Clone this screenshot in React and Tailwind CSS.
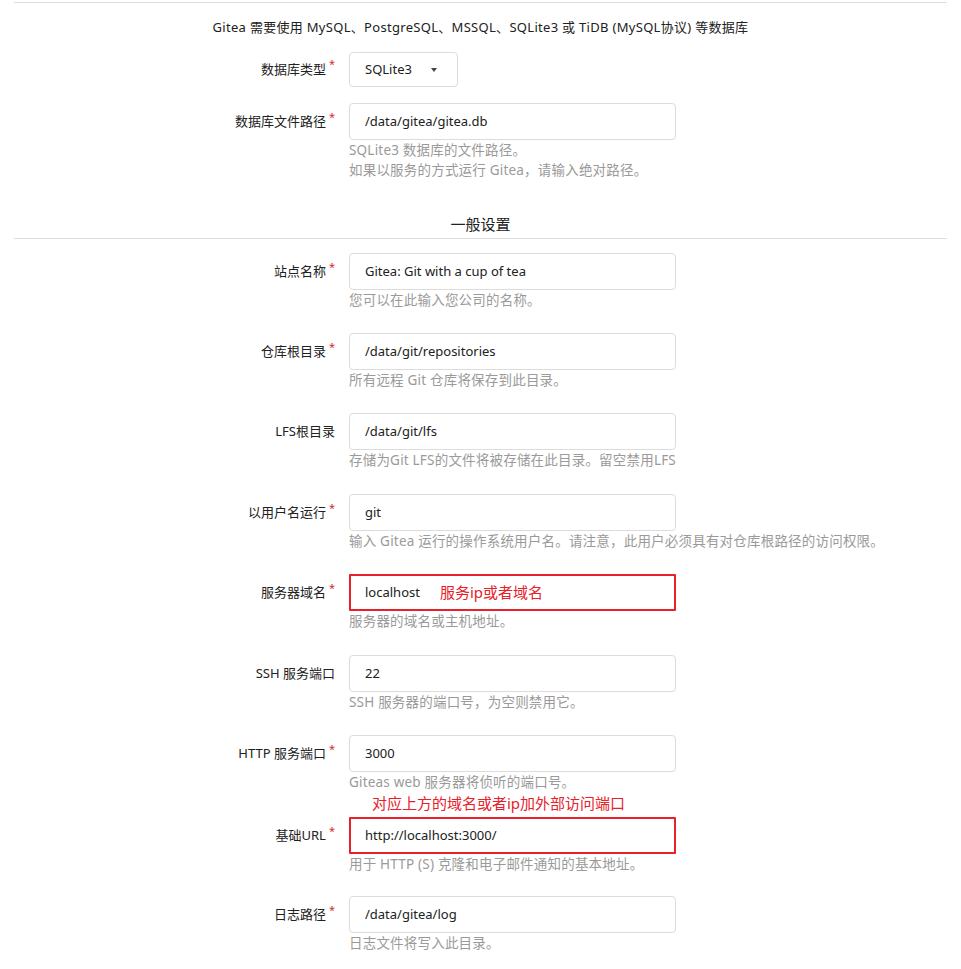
import React from 'react';

const FONT = { fontFamily: '"Noto Sans", "Noto Sans CJK SC", sans-serif' };

const Star = () => <span className="relative -top-[4px] ml-[3px] text-[11px] text-[#db2828]">*</span>;

const Label = ({ text, required }) => (
  <div className="w-[321px] shrink-0 h-[37px] flex items-center justify-end text-[13px] text-[#212121]">
    <span>{text}</span>
    {required ? <Star /> : null}
  </div>
);

const Field = ({ label, required, value, help = [], mark, note, className = 'mb-[23px]' }) => (
  <div className={`flex items-start gap-[14px] ${className}`}>
    <Label text={label} required={required} />
    <div className="w-[327px]">
      <div
        className={`h-[37px] flex items-center text-[13px] text-[#212121] ${
          mark ? 'border-2 border-[#e8202a] rounded-[1px] px-[14px]' : 'border border-[#dcdcdc] rounded-[4px] px-[15px]'
        }`}
      >
        <span>{value}</span>
        {note ? <span className="ml-[20px] text-[15px] text-[#e8202a]">{note}</span> : null}
      </div>
      {help.map((h) => (
        <div key={h} className="text-[13.5px] leading-[19px] mt-[1px] tracking-[0.2px] text-[#9a9a9a] whitespace-nowrap">
          {h}
        </div>
      ))}
    </div>
  </div>
);

export default function App() {
  return (
    <div className="min-h-screen bg-white pt-[2px] px-[14px]" style={FONT}>
      <div className="border-t border-[#dedede]" />
      <div className="mt-[14px] text-center text-[13px] leading-[20px] tracking-[0.3px] text-[#212121]">
        Gitea 需要使用 MySQL、PostgreSQL、MSSQL、SQLite3 或 TiDB (MySQL协议) 等数据库
      </div>

      <div className="mt-[15px] mb-[16px] flex items-center gap-[14px]">
        <div className="w-[321px] shrink-0 flex justify-end text-[13px] text-[#212121]">
          <span>数据库类型</span>
          <Star />
        </div>
        <div className="w-[109px] h-[35px] rounded-[4px] border border-[#dcdcdc] flex items-center justify-between pl-[15px] pr-[20px] text-[13px] text-[#212121]">
          <span>SQLite3</span>
          <span className="w-0 h-0 border-l-[3.5px] border-r-[3.5px] border-t-[4px] border-l-transparent border-r-transparent border-t-[#444]" />
        </div>
      </div>

      <Field
        label="数据库文件路径"
        required
        value="/data/gitea/gitea.db"
        help={['SQLite3 数据库的文件路径。', '如果以服务的方式运行 Gitea，请输入绝对路径。']}
        className=""
      />

      <div className="mt-[33px] border-b border-[#dedede] pb-[3px] text-center text-[15px] leading-[22px] text-[#212121]">
        一般设置
      </div>

      <div className="mt-[14px]">
        <Field label="站点名称" required value="Gitea: Git with a cup of tea" help={['您可以在此输入您公司的名称。']} />
        <Field label="仓库根目录" required value="/data/git/repositories" help={['所有远程 Git 仓库将保存到此目录。']} />
        <Field label="LFS根目录" value="/data/git/lfs" help={['存储为Git LFS的文件将被存储在此目录。留空禁用LFS']} className="mb-[24px]" />
        <Field
          label="以用户名运行"
          required
          value="git"
          help={['输入 Gitea 运行的操作系统用户名。请注意，此用户必须具有对仓库根路径的访问权限。']}
        />
        <Field
          label="服务器域名"
          required
          value="localhost"
          mark
          note="服务ip或者域名"
          help={['服务器的域名或主机地址。']}
          className="mb-[24px]"
        />
        <Field label="SSH 服务端口" value="22" help={['SSH 服务器的端口号，为空则禁用它。']} />
        <Field label="HTTP 服务端口" required value="3000" help={['Giteas web 服务器将侦听的端口号。']} className="" />
        <div className="pl-[358px] text-[15px] leading-[22px] mt-[0px] mb-[3px] text-[#e8202a]">
          对应上方的域名或者ip加外部访问端口
        </div>
        <Field
          label="基础URL"
          required
          value="http://localhost:3000/"
          mark
          help={['用于 HTTP (S) 克隆和电子邮件通知的基本地址。']}
          className="mb-[22px]"
        />
        <Field label="日志路径" required value="/data/gitea/log" help={['日志文件将写入此目录。']} />
      </div>
    </div>
  );
}
